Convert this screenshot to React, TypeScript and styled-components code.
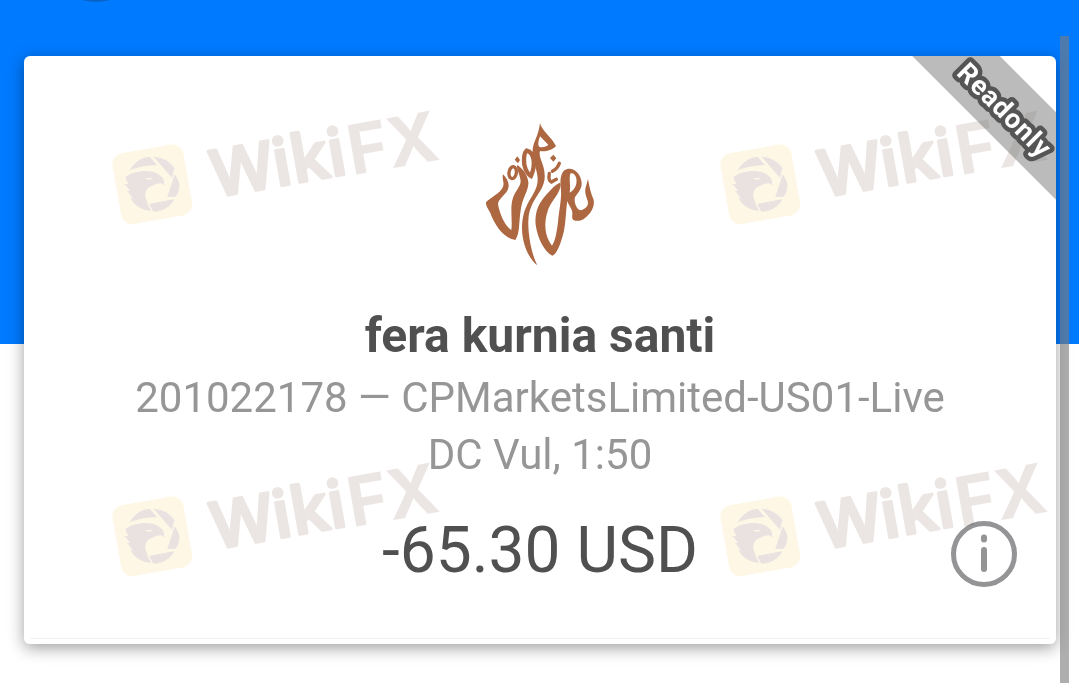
import React from "react";
import styled, { createGlobalStyle } from "styled-components";

const GlobalStyle = createGlobalStyle`
  *, *::before, *::after { box-sizing: border-box; }
  body {
    margin: 0;
    background: #fff;
    font-family: Roboto, "Liberation Sans", sans-serif;
  }
  button { font: inherit; }
`;

const Page = styled.main`
  position: relative;
  min-height: 100vh;
  padding: 56px 23px 39px 24px;
  overflow: hidden;
  background: linear-gradient(#007aff 344px, #fff 344px);
`;

const HeaderKnob = styled.span`
  position: absolute;
  top: -98px;
  left: 46px;
  width: 100px;
  height: 100px;
  border-radius: 50%;
  background: #0864c8;
`;

const ScrollThumb = styled.div`
  position: absolute;
  top: 36px;
  right: 10px;
  bottom: 0;
  width: 9px;
  background: rgba(124, 124, 124, 0.62);
`;

const Shadow = styled.div`
  border-radius: 6px;
  box-shadow: 0 4px 16px rgba(0, 0, 0, 0.38);
`;

const Card = styled.article`
  position: relative;
  display: flex;
  flex-direction: column;
  align-items: center;
  padding: 54px 0 5px;
  border-radius: 6px;
  overflow: hidden;
  background: #fff;
`;

const Name = styled.h1`
  margin: 31px 0 3px;
  font-size: 48px;
  line-height: 60px;
  font-weight: 700;
  color: #505050;
`;

const Detail = styled.p`
  margin: 0;
  font-size: 42px;
  line-height: 57px;
  color: #969697;
  text-align: center;
`;

const BalanceRow = styled.div`
  display: grid;
  grid-template-columns: 1fr auto 1fr;
  align-items: center;
  width: 100%;
  margin-top: 28px;
  padding: 0 38px;
`;

const Balance = styled.p`
  grid-column: 2;
  margin: 0;
  font-size: 64px;
  line-height: 80px;
  color: #505050;
`;

const InfoButton = styled.button`
  justify-self: end;
  width: 68px;
  height: 68px;
  margin-top: 6px;
  padding: 0;
  border: 0;
  background: none;
  color: #949496;
`;

const Divider = styled.hr`
  align-self: stretch;
  height: 1px;
  margin: 47px 6px 0;
  border: 0;
  background: #f1f1f1;
`;

const Ribbon = styled.div`
  position: absolute;
  top: 19px;
  right: -70px;
  width: 240px;
  height: 62px;
  display: flex;
  align-items: center;
  justify-content: center;
  background: rgba(120, 120, 122, 0.5);
  transform: rotate(45deg);
`;

const RibbonLabel = styled.svg`
  width: 140px;
  height: 40px;
  overflow: visible;

  text {
    font-size: 27px;
    font-weight: 700;
    letter-spacing: 1px;
    fill: #fff;
    stroke: #555;
    stroke-width: 9px;
    stroke-linejoin: round;
    paint-order: stroke fill;
  }
`;

const WatermarkLayer = styled.div`
  position: absolute;
  inset: 0;
  display: grid;
  grid-template-columns: 350px 350px;
  grid-auto-rows: 135px;
  gap: 217px 258px;
  padding: 44px 0 0 76px;
  mix-blend-mode: multiply;
  pointer-events: none;
`;

function Watermark() {
  return (
    <svg width="350" height="135" viewBox="0 0 1050 405" overflow="visible" aria-hidden="true">
      <rect x="49" y="145" width="216" height="216" rx="34" transform="rotate(-10 157 253)" fill="#fef7e6" />
      <g fill="#e9e2e1">
        <path d="M89 211C100 188 125 172 149 170L171 196C143 196 116 200 89 211Z" />
        <path d="M161 170C190 172 213 187 223 205L216 234L166 176Z" />
        <path d="M224 223C242 245 243 270 227 290L202 291Z" />
        <path d="M147 312L224 297C211 321 187 335 160 335Z" />
        <path d="M76 232C92 219 120 211 148 214C165 216 181 224 190 236L193 256L183 250L166 252C158 258 143 262 138 272C131 286 141 306 153 333C121 330 101 313 91 294L99 296L81 272L91 274L74 252L85 253Z" />
      </g>
      <path d="M134 235L158 233C155 240 145 241 134 235Z" fill="#fef7e6" />
      <g transform="rotate(-10 345 298)" fill="#ebe5e3" stroke="#ebe5e3">
        <text x="348" y="292" fontFamily="Open Sans, sans-serif" fontSize="196" fontWeight="600" strokeWidth="9" strokeLinejoin="round">Wiki</text>
        <text x="762" y="298" fontFamily="Inter, sans-serif" fontSize="206" fontWeight="700" strokeWidth="0">FX</text>
      </g>
    </svg>
  );
}

function BrandLogo() {
  return (
    <svg width="140" height="165" viewBox="0 0 420 495" role="img" aria-label="Broker logo">
      <g fill="#ad6741" fillRule="evenodd">
        <path d="M210 39C214 60 246 83 258 108C247 121 224 126 210 123C204 145 226 163 224 203C222 244 184 265 176 318C171 365 184 431 202 466C178 448 157 405 156 356C157 285 188 267 200 229C210 196 192 170 188 132C185 98 205 84 210 39ZM210 79C206 91 202 104 208 110C217 114 230 110 235 104Z" />
        <path d="M99 193C112 207 121 222 113 240C103 258 84 268 84 283C90 314 104 347 124 360C128 330 119 293 129 263C138 238 156 226 151 207C148 190 140 180 141 165C154 172 172 192 175 216C177 238 160 258 153 294C145 342 151 366 136 390C105 387 74 347 61 309C52 294 47 286 48 277C61 262 92 249 99 230C104 216 95 208 99 193Z" />
        <path d="M142 139L150 150L144 160L134 149ZM250 134L259 145L250 155L240 144Z" />
        <path d="M270 218C277 245 246 268 234 300C219 342 226 382 246 407C257 391 260 365 264 337C267 300 275 270 273 240C270 215 270 194 283 181C303 166 333 186 335 219C336 242 316 254 314 265C313 283 322 301 333 301C347 295 357 288 353 272C347 256 343 243 348 229L354 207C358 230 362 249 371 269C375 291 362 310 345 324C337 332 320 336 309 329C304 322 309 312 306 302C302 290 295 284 292 273C287 301 288 348 278 378C270 405 261 432 247 437C222 423 203 386 197 344C193 290 219 265 237 245C250 233 252 226 270 218ZM301 191C296 207 303 226 299 248C317 239 323 218 318 202C315 192 306 187 301 191Z" />
      </g>
      <g fill="none" stroke="#ad6741" strokeLinecap="round">
        <ellipse cx="128" cy="188" rx="11" ry="18" strokeWidth="10" transform="rotate(8 128 188)" />
        <path d="M170 122C193 128 198 162 183 198C169 190 161 168 162 150C162 136 164 127 170 122Z" strokeWidth="13" />
        <path d="M268 160Q262 176 247 184" strokeWidth="10" />
        <path d="M238 190Q234 211 244 216L259 208" strokeWidth="10" />
      </g>
    </svg>
  );
}

export default function App() {
  return (
    <>
      <GlobalStyle />
      <Page>
        <HeaderKnob />
        <Shadow>
          <Card>
            <BrandLogo />
            <Name>fera kurnia santi</Name>
            <Detail>201022178 — CPMarketsLimited-US01-Live</Detail>
            <Detail>DC Vul, 1:50</Detail>
            <BalanceRow>
              <Balance>-65.30 USD</Balance>
              <InfoButton type="button" aria-label="Account information">
                <svg width="68" height="68" viewBox="0 0 68 68" fill="none" stroke="currentColor" strokeLinecap="round">
                  <circle cx="34" cy="34" r="30.5" strokeWidth="5" />
                  <path d="M34 17.5v2M34 30v19" strokeWidth="6" />
                </svg>
              </InfoButton>
            </BalanceRow>
            <Divider />
            <WatermarkLayer>
              <Watermark />
              <Watermark />
              <Watermark />
              <Watermark />
            </WatermarkLayer>
            <Ribbon>
              <RibbonLabel viewBox="0 0 140 40">
                <text x="72" y="33" textAnchor="middle">Readonly</text>
              </RibbonLabel>
            </Ribbon>
          </Card>
        </Shadow>
        <ScrollThumb />
      </Page>
    </>
  );
}
